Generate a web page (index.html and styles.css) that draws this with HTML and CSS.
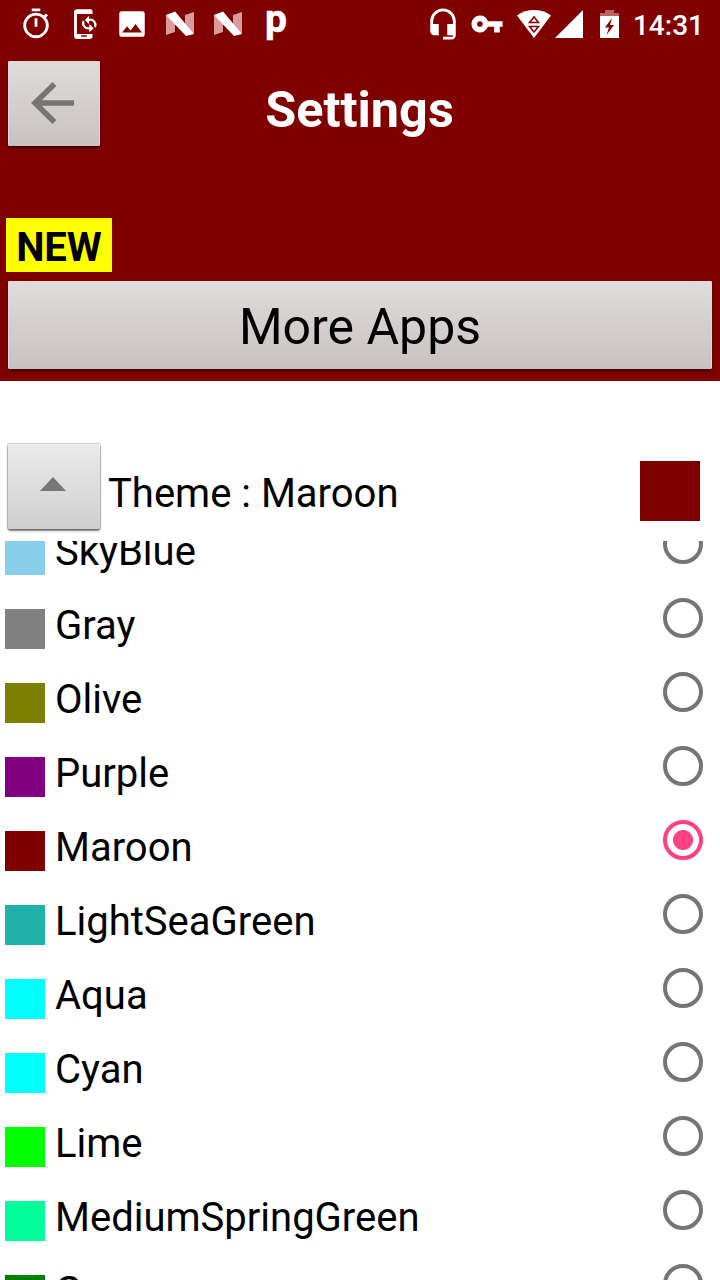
FILE: index.html
```html
<!DOCTYPE html>
<html lang="en">
<head>
<meta charset="utf-8">
<title>Settings</title>
<link rel="stylesheet" href="styles.css">
</head>
<body>
<header class="header">
  <div class="status">
    <div class="notifications">
      <svg viewBox="0 0 24 24"><path d="M15 1H9v2h6V1zm-4 13h2V8h-2v6zm8.03-6.61l1.42-1.42c-.43-.51-.9-.99-1.41-1.41l-1.42 1.42A8.96 8.96 0 0 0 12 4a9 9 0 1 0 7.03 3.39zM12 20a7 7 0 1 1 0-14 7 7 0 0 1 0 14z"/></svg>
      <svg viewBox="0 0 24 24"><path d="M17 1.500H7a2 2 0 0 0-2 2v17a2 2 0 0 0 2 2h9a2 2 0 0 0 2-2V19H7V5h11V3a1.500 1.500 0 0 0-1-1.500zM10 20h4v1h-4z"/><path d="M15.600 6.200v2.100a4.300 4.300 0 0 1 4.600 6.400l-1.200-1.200a2.700 2.700 0 0 0-3.400-3.600v2.200l-3-3zM15.800 17.800v-2.100a4.300 4.300 0 0 1-4.600-6.400l1.200 1.200a2.700 2.700 0 0 0 3.400 3.600V12l3 3z"/></svg>
      <svg viewBox="0 0 24 24"><path d="M21 19V5a2 2 0 0 0-2-2H5a2 2 0 0 0-2 2v14a2 2 0 0 0 2 2h14a2 2 0 0 0 2-2zM8.500 13.500l2.500 3.010L14.500 12l4.500 6H5l3.500-4.500z"/></svg>
      <svg viewBox="0 0 34 34"><path class="faint" d="M3 8l9-2v19l-9 3zM22 8l9-3V26l-9 2z"/><path d="M3 8l9-3.500 19 22.500-8 2z"/></svg>
      <svg viewBox="0 0 34 34"><path class="faint" d="M3 8l9-2v19l-9 3zM22 8l9-3V26l-9 2z"/><path d="M3 8l9-3.500 19 22.500-8 2z"/></svg>
      <span class="letter">p</span>
    </div>
    <div class="system">
      <svg class="headset" viewBox="0 0 24 24"><path d="M12 1a9 9 0 0 0-9 9v7a3 3 0 0 0 3 3h3v-8H5v-2a7 7 0 1 1 14 0v2h-4v8h4v1h-7v2h6a3 3 0 0 0 3-3V10a9 9 0 0 0-9-9z"/></svg>
      <svg class="key" viewBox="0 0 24 24"><path d="M12.650 10A6 6 0 0 0 7 6a6 6 0 1 0 5.650 8H17v4h4v-4h2v-4H12.650zM7 14a2 2 0 1 1 0-4 2 2 0 0 1 0 4z"/></svg>
      <svg class="wifi" viewBox="0 0 34 28"><path d="M0 5.500C10-1.800 24-1.800 34 5.500L17 28z"/><path class="cutout" d="M12.500 12.500h9L17 7zM12.500 16.500h9L17 22z"/></svg>
      <svg class="signal" viewBox="0 0 28 28"><path d="M0 28L28 0v28z"/></svg>
      <svg class="battery" viewBox="0 0 19 28"><path class="cap" d="M5 0h9v3h5v3H0V3h5z"/><path d="M0 6h19v22H0z"/><path class="bolt" d="M12 8L5 17.500h4L6.500 25 14 15h-4z"/></svg>
      <time>14:31</time>
    </div>
  </div>
  <div class="titlebar">
    <button class="button square" aria-label="Back"><svg class="arrow" viewBox="0 0 44 44"><path d="M23.500 3L4 22l19.500 19M4 22h39"/></svg></button>
    <h1>Settings</h1>
  </div>
  <div class="new">NEW</div>
  <button class="button more">More Apps</button>
</header>
<main class="main">
  <section class="theme">
    <button class="button square light" aria-label="Collapse"><svg class="caret" viewBox="0 0 26 14"><path d="M0 14L13 0l13 14z"/></svg></button>
    <span class="theme-name">Theme : Maroon</span>
    <i class="preview"></i>
  </section>
  <div class="list">
    <ul class="rows">
      <li><i class="swatch skyblue"></i><span>SkyBlue</span><b class="radio"></b></li>
      <li><i class="swatch gray"></i><span>Gray</span><b class="radio"></b></li>
      <li><i class="swatch olive"></i><span>Olive</span><b class="radio"></b></li>
      <li><i class="swatch purple"></i><span>Purple</span><b class="radio"></b></li>
      <li><i class="swatch maroon"></i><span>Maroon</span><b class="radio checked"></b></li>
      <li><i class="swatch seagreen"></i><span>LightSeaGreen</span><b class="radio"></b></li>
      <li><i class="swatch aqua"></i><span>Aqua</span><b class="radio"></b></li>
      <li><i class="swatch aqua"></i><span>Cyan</span><b class="radio"></b></li>
      <li><i class="swatch lime"></i><span>Lime</span><b class="radio"></b></li>
      <li><i class="swatch spring"></i><span>MediumSpringGreen</span><b class="radio"></b></li>
      <li><i class="swatch green"></i><span>Green</span><b class="radio"></b></li>
    </ul>
  </div>
</main>
</body>
</html>
```
FILE: styles.css
```css
* { box-sizing: border-box; }
body { margin: 0; width: 720px; height: 1280px; overflow: hidden; display: flex; flex-direction: column; background: #fff; color: #000; font: 40px/48px Roboto, sans-serif; }
.header { flex: none; height: 381px; background: maroon; display: flex; flex-direction: column; align-items: flex-start; }
.status { width: 100%; height: 48px; flex: none; display: flex; justify-content: space-between; padding-left: 12px; padding-right: 16px; color: #fff; }
.status svg { fill: #fff; flex: none; display: block; }
.status .faint { fill: #d99a9a; }
.status .cap { fill: #b36666; }
.status .bolt { fill: maroon; }
.status .cutout { fill: #fff; stroke: maroon; stroke-width: 1.5; }
.notifications { display: flex; align-items: center; gap: 14px; padding-left: 7px; }
.notifications svg { width: 34px; height: 34px; }
.letter { width: 34px; text-align: center; font-weight: 700; font-size: 39px; line-height: 48px; height: 48px; margin-top: -11px; -webkit-text-stroke: 0.6px #fff; }
.system { display: flex; align-items: center; }
.headset, .key { width: 34px; height: 34px; }
.key { margin-left: 10px; }
.wifi { width: 34px; height: 28px; margin-left: 13px; }
.signal { width: 28px; height: 28px; margin-left: 4px; }
.battery { width: 19px; height: 28px; margin-left: 17px; }
.system time { font-size: 28px; font-weight: 500; line-height: 34px; margin-left: 14px; padding-top: 4px; }
.titlebar { width: 100%; height: 85px; flex: none; margin-top: 13px; padding: 0 8px; display: grid; grid-template-columns: 92px 1fr 92px; }
h1 { margin: 0 0 0 -1px; color: #fff; text-align: center; font-size: 50.4px; line-height: 58px; padding-top: 20px; }
.button { border: 0; border-radius: 2px; padding: 0; font: inherit; color: #000; display: flex; align-items: center; justify-content: center; background: linear-gradient(#e1dcdc, #c8c2c2); box-shadow: inset 0 1px #e9d6d6, inset -1px 0 #ddd6d6, inset 1px 0 #ddd6d6, 0 2px 3px rgba(0,0,0,.5); }
.square { width: 92px; height: 85px; padding: 0 2px 2px 0; }
.arrow { width: 44px; height: 44px; fill: none; stroke: #777474; stroke-width: 5.5; }
.new { flex: none; width: 106px; height: 54px; margin: 72px 0 0 6px; background: #ff0; text-align: center; font-weight: 700; line-height: 60px; }
.more { flex: none; width: 704px; height: 88px; margin: 9px 0 0 8px; font-size: 50px; padding-top: 4px; }
.main { flex: 1; min-height: 0; display: flex; flex-direction: column; }
.theme { height: 160px; flex: none; padding: 63px 20px 0 8px; display: flex; align-items: flex-start; }
.light { padding-bottom: 5px; background: linear-gradient(#ebebeb, #cfcfcf); box-shadow: inset 0 1px #f0f0f0, 0 0 1px 1px rgba(0,0,0,.2), 0 2px 2px rgba(0,0,0,.5); }
.caret { width: 26px; height: 14px; fill: #777; }
.theme-name { flex: 1; padding: 26px 0 0 8px; }
.preview { width: 60px; height: 60px; margin-top: 17px; background: maroon; }
.list { flex: 1; min-height: 0; overflow: hidden; }
.rows { list-style: none; margin: -17px 0 0; padding: 0 17px 0 5px; }
.rows li { height: 74px; display: flex; align-items: flex-start; }
.rows span { flex: 1; padding: 4px 0 0 10px; }
.swatch { width: 40px; height: 40px; margin-top: 11px; }
.skyblue { background: skyblue; } .gray { background: gray; } .olive { background: olive; }
.purple { background: purple; } .maroon { background: maroon; } .seagreen { background: lightseagreen; }
.aqua { background: aqua; } .lime { background: lime; } .spring { background: #00ff9a; } .green { background: green; }
.radio { width: 40px; height: 40px; border: 4px solid #757575; border-radius: 50%; }
.checked { border-color: #ff4081; background: radial-gradient(circle, #ff4081 9.500px, transparent 10.500px); }
```
